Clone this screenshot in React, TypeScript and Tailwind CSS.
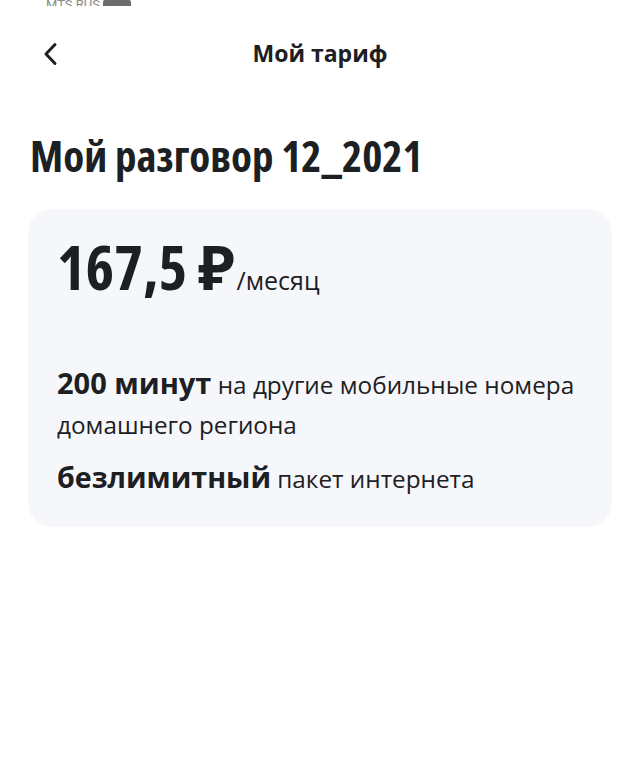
import React from "react";

export default function App() {
  return (
    <div className="w-[640px] h-[764px] bg-white text-[#1d2023] overflow-hidden font-['Open_Sans','Noto_Sans',sans-serif]">
      {/* status bar (cut off at the top) */}
      <div className="h-[6px] overflow-hidden flex items-end pl-[46px] gap-[3px]">
        <span className="text-[13px] leading-none text-[#8a8a8a] mb-[-5px] font-['Roboto',sans-serif]">MTS RUS</span>
        <span className="bg-[#6b6b6b] rounded-[2px] w-[28px] h-[12px] mb-[-6px]"></span>
      </div>
      {/* header */}
      <div className="relative h-[96px] flex items-center justify-center">
        <button className="absolute left-[38px] top-[36px] w-[24px] h-[24px] flex items-center justify-center">
          <svg width="16" height="24" viewBox="0 0 16 24" fill="none">
            <path d="M13 2.5 L4 12 L13 21.5" stroke="#1d2023" strokeWidth="3" strokeLinecap="round" strokeLinejoin="round" />
          </svg>
        </button>
        <h1 className="text-[23px] font-bold leading-none mt-[-2px]">Мой тариф</h1>
      </div>
      {/* title */}
      <div className="px-[30px] pt-[28px]">
        <h2 className="text-[43px] font-bold leading-[52px] font-stretch-condensed">Мой разговор 12_2021</h2>
      </div>
      {/* card */}
      <div className="mx-[28px] mt-[27px] rounded-[24px] bg-[#f6f7fa] px-[29px] pt-[22px] pb-[28px]">
        <div className="flex items-baseline">
          <span className="text-[61px] font-bold leading-[72px] font-stretch-condensed">167,5 ₽</span>
          <span className="text-[25px] leading-none ml-[2px]">/месяц</span>
        </div>
        <div className="mt-[60px] text-[24.3px] leading-[40px]">
          <p>
            <span className="text-[29px] font-bold">200 минут</span> на другие мобильные номера домашнего региона
          </p>
          <p className="mt-[12px]">
            <span className="text-[28.6px] font-bold">безлимитный</span> пакет интернета
          </p>
        </div>
      </div>
    </div>
  );
}
